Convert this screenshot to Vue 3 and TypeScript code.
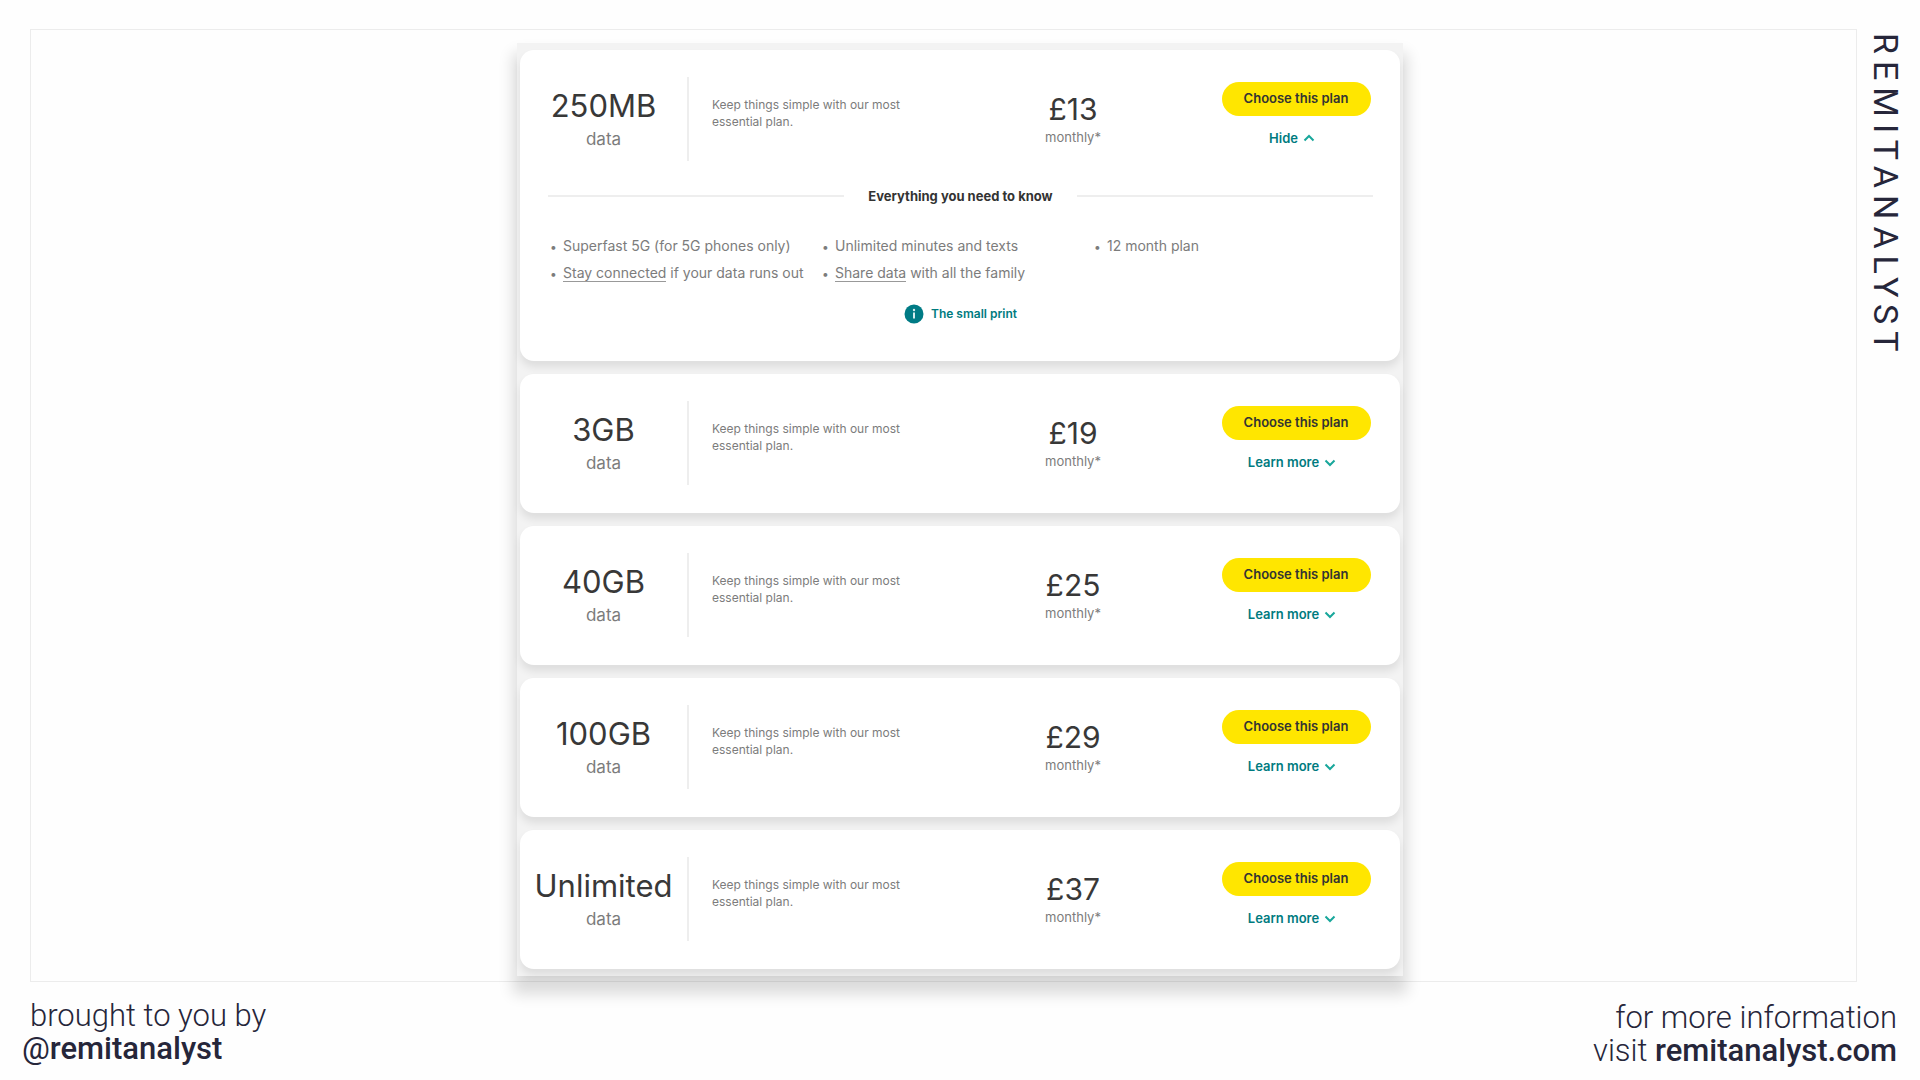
<script setup lang="ts">
import { ref } from 'vue'

interface Plan {
  data: string
  price: string
}

const plans: Plan[] = [
  { data: '250MB', price: '£13' },
  { data: '3GB', price: '£19' },
  { data: '40GB', price: '£25' },
  { data: '100GB', price: '£29' },
  { data: 'Unlimited', price: '£37' },
]

const openPlan = ref<string | null>('250MB')

function toggle(plan: Plan) {
  openPlan.value = openPlan.value === plan.data ? null : plan.data
}
</script>

<template>
  <div class="page">
    <main class="frame">
      <section class="panel" aria-label="Plans">
        <article v-for="plan in plans" :key="plan.data" class="card">
          <div class="summary">
            <h2 class="allowance">
              <span class="amount">{{ plan.data }}</span>
              <span class="unit">data</span>
            </h2>
            <p class="about">Keep things simple with our most essential plan.</p>
            <p class="price">
              <span class="amount">{{ plan.price }}</span>
              <span class="period">monthly*</span>
            </p>
            <div class="actions">
              <button type="button" class="choose">Choose this plan</button>
              <button
                type="button"
                class="toggle"
                :aria-expanded="openPlan === plan.data"
                @click="toggle(plan)"
              >
                {{ openPlan === plan.data ? 'Hide' : 'Learn more' }}
                <svg class="chevron" viewBox="0 0 12 12" aria-hidden="true">
                  <path :d="openPlan === plan.data ? 'M1.5 8.5 6 4l4.5 4.5' : 'M1.5 4.5 6 9l4.5-4.5'" />
                </svg>
              </button>
            </div>
          </div>
          <div v-if="openPlan === plan.data" class="details">
            <h3 class="heading">Everything you need to know</h3>
            <ul class="features">
              <li>Superfast 5G (for 5G phones only)</li>
              <li>Unlimited minutes and texts</li>
              <li>12 month plan</li>
              <li><a href="#stay-connected">Stay connected</a> if your data runs out</li>
              <li><a href="#share-data">Share data</a> with all the family</li>
            </ul>
            <a class="small-print" href="#small-print">
              <svg viewBox="0 0 20 20" aria-hidden="true">
                <circle cx="10" cy="10" r="9.5" fill="#007b85" />
                <circle cx="10" cy="6" r="1.2" fill="#d5ecee" />
                <path d="M10 8.6v6" stroke="#d5ecee" stroke-width="2" />
              </svg>
              The small print
            </a>
          </div>
        </article>
      </section>
    </main>
    <aside class="brand">REMITANALYST</aside>
    <footer class="footer">
      <p class="credit">
        <span class="intro">brought to you by</span>
        <a href="#remitanalyst"><span class="at">@</span>remitanalyst</a>
      </p>
      <p class="visit">
        for more information<br />
        visit <a href="#site">remitanalyst.com</a>
      </p>
    </footer>
  </div>
</template>

<style>
body {
  margin: 0;
  background: #fefefe;
}
</style>

<style scoped>
.page {
  display: grid;
  grid-template-columns: minmax(0, 1fr) 63px;
  padding: 29px 0 0 30px;
  min-height: 100vh;
  box-sizing: border-box;
  align-content: start;
  color: #26263a;
  font-family: Roboto, sans-serif;
}

h2,
h3,
p,
ul {
  margin: 0;
  padding: 0;
  font-weight: 400;
}

button {
  border: 0;
  padding: 0;
  background: none;
  font: inherit;
  cursor: pointer;
}

a {
  color: inherit;
  text-decoration: none;
}

.frame {
  display: flex;
  justify-content: center;
  padding: 13px 0 5px 33px;
  border: 1px solid #ececec;
}

.panel {
  display: flex;
  flex-direction: column;
  gap: 13px;
  width: 100%;
  max-width: 886px;
  box-sizing: border-box;
  padding: 7px 3px;
  background: #f3f3f3;
  box-shadow: 0 14px 14px 4px rgba(0, 0, 0, 0.14);
  font-family: Inter, sans-serif;
  color: #7c7c7c;
}

.card {
  border-radius: 14px;
  background: #fff;
  box-shadow: 0 6px 8px rgba(0, 0, 0, 0.09);
}

.summary {
  display: grid;
  grid-template-columns: 169px 1fr 238px 208px;
  padding: 27px 0 28px;
}

.allowance,
.price {
  display: flex;
  flex-direction: column;
  align-items: center;
}

.allowance {
  height: 84px;
  border-right: 2px solid #eee;
}

.amount {
  color: #383838;
  font-size: 30px;
  line-height: 36px;
}

.allowance .amount {
  padding-top: 11px;
  font-size: 31px;
}

.unit {
  font-size: 17px;
  line-height: 30px;
}

.about {
  max-width: 200px;
  padding: 19px 0 0 23px;
  font-size: 12px;
  line-height: 17px;
}

.price .amount {
  padding-top: 14px;
}

.period {
  font-size: 13px;
  line-height: 20px;
}

.actions {
  display: flex;
  flex-direction: column;
  align-items: center;
  gap: 13px;
  padding-top: 5px;
}

.choose {
  width: 149px;
  height: 34px;
  padding-bottom: 2px;
  border-radius: 17px;
  background: #ffe600;
  color: #333;
  font-size: 13px;
  font-weight: 600;
}

.toggle {
  display: flex;
  align-items: center;
  gap: 5px;
  padding-right: 8px;
  color: #007b7f;
  font-size: 13px;
  font-weight: 600;
  line-height: 18px;
}

.chevron {
  width: 12px;
  height: 12px;
  fill: none;
  stroke: #18a79b;
  stroke-width: 2;
}

.details {
  display: flex;
  flex-direction: column;
  padding: 0 27px 37px 28px;
}

.heading {
  display: flex;
  align-items: center;
  gap: 24px;
  color: #333;
  font-size: 13px;
  font-weight: 700;
  line-height: 20px;
  margin-top: -3px;
}

.heading::before,
.heading::after {
  content: '';
  flex: 1;
  height: 2px;
  background: #eee;
}

.features {
  display: grid;
  grid-template-columns: repeat(3, 272px);
  row-gap: 6px;
  margin-top: 30px;
  list-style: none;
  font-size: 14px;
  line-height: 20px;
}

.features li {
  white-space: nowrap;
}

.features li::before {
  content: '•';
  display: inline-block;
  width: 13px;
  padding-left: 2px;
  font-size: 12px;
}

.features a {
  border-bottom: 1px solid #999;
}

.small-print {
  display: flex;
  align-items: center;
  align-self: center;
  gap: 7px;
  margin-top: 20px;
  color: #007b7f;
  font-size: 12px;
  font-weight: 600;
  line-height: 20px;
}

.small-print svg {
  width: 20px;
  height: 20px;
}

.brand {
  justify-self: center;
  writing-mode: vertical-rl;
  padding: 4px 6px 0 0;
  font-size: 34px;
  line-height: 40px;
  letter-spacing: 7px;
}

.footer {
  grid-column: 1 / -1;
  display: flex;
  justify-content: space-between;
  padding: 17px 23px 0 0;
  font-family: 'Roboto Light', Roboto, sans-serif;
  font-size: 31px;
  font-weight: 300;
  line-height: 33px;
}

.footer a {
  font-family: Roboto, sans-serif;
  font-weight: 500;
}

.credit {
  display: flex;
  flex-direction: column;
  margin-left: -8px;
}

.intro {
  padding-left: 8px;
}

.footer .at {
  font-weight: 400;
}

.visit {
  padding-top: 2px;
  text-align: right;
}
</style>
